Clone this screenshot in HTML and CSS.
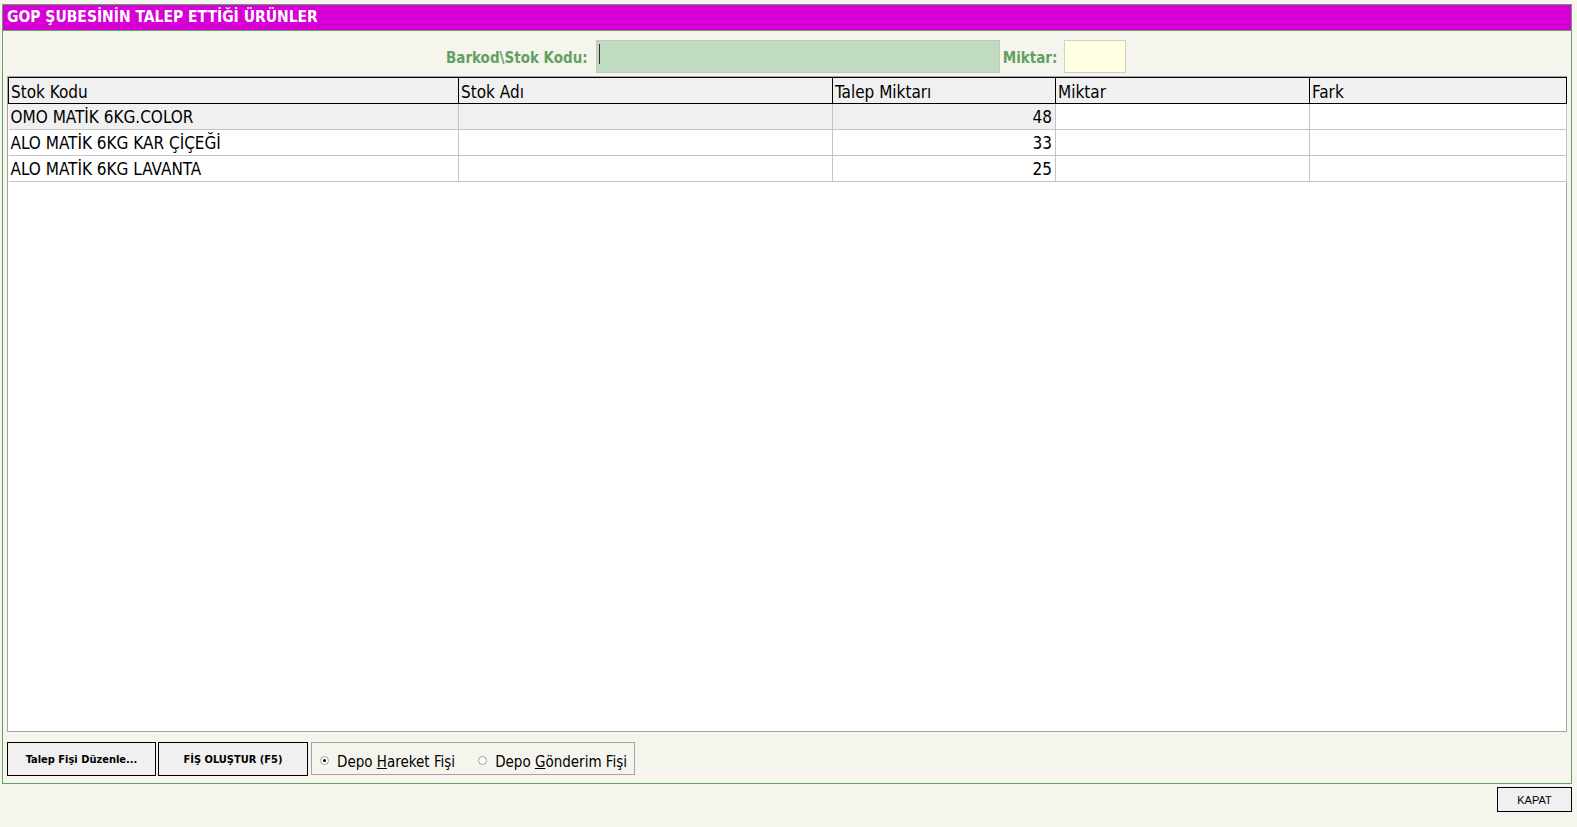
FILE: index.html
```html
<!DOCTYPE html>
<html lang="tr">
<head>
<meta charset="utf-8">
<title>GOP Şubesinin Talep Ettiği Ürünler</title>
<link rel="stylesheet" href="styles.css">
</head>
<body>
<div class="frame">
  <div class="title">GOP ŞUBESİNİN TALEP ETTİĞİ ÜRÜNLER</div>
  <div class="content">
    <div class="searchbar">
      <span class="lbl lbl-barkod">Barkod\Stok Kodu:</span>
      <div class="inp inp-barkod"><span class="caret"></span></div>
      <span class="lbl lbl-miktar">Miktar:</span>
      <div class="inp inp-miktar"></div>
    </div>
    <div class="grid">
      <table class="tbl">
        <colgroup>
          <col class="c1"><col class="c2"><col class="c3"><col class="c4"><col class="c5">
        </colgroup>
        <thead>
          <tr><th>Stok Kodu</th><th>Stok Adı</th><th>Talep Miktarı</th><th>Miktar</th><th>Fark</th></tr>
        </thead>
        <tbody>
          <tr class="cur"><td class="ro">OMO MATİK 6KG.COLOR</td><td class="ro"></td><td class="ro num">48</td><td></td><td></td></tr>
          <tr><td>ALO MATİK 6KG KAR ÇİÇEĞİ</td><td></td><td class="num">33</td><td></td><td></td></tr>
          <tr><td>ALO MATİK 6KG LAVANTA</td><td></td><td class="num">25</td><td></td><td></td></tr>
        </tbody>
      </table>
    </div>
    <div class="actions">
      <button class="btn btn-edit">Talep Fişi Düzenle...</button>
      <button class="btn btn-create">FİŞ OLUŞTUR (F5)</button>
      <div class="radiogroup">
        <label class="radio"><span class="dot on"></span><span>Depo <u>H</u>areket Fişi</span></label>
        <label class="radio"><span class="dot"></span><span>Depo <u>G</u>önderim Fişi</span></label>
      </div>
    </div>
  </div>
</div>
<div class="footer">
  <button class="btn-kapat">KAPAT</button>
</div>
</body>
</html>
```

FILE: styles.css
```css
html, body {
  margin: 0;
  padding: 0;
  background: #f5f5ee;
  font-family: "DejaVu Sans Condensed", "DejaVu Sans", sans-serif;
  font-stretch: condensed;
}

.frame {
  margin: 4px 0 0 2px;
  width: 1570px;
  box-sizing: border-box;
  border: 1px solid #64a064;
}

.title {
  height: 25px;
  background: #d600d6;
  border-bottom: 1px solid #64a064;
  color: #ffffff;
  font-weight: bold;
  font-size: 15.5px;
  line-height: 25px;
  padding-left: 4px;
}

.content {
  display: flex;
  flex-direction: column;
  padding: 9px 4px 7px 4px;
}

.searchbar {
  display: flex;
  align-items: center;
  height: 33px;
  padding-left: 439px;
}

.lbl {
  color: #64a064;
  font-weight: bold;
  font-size: 15px;
  padding-top: 2px;
}

.lbl-barkod { margin-right: 8px; }
.lbl-miktar { margin: 0 7px 0 3px; }

.inp {
  box-sizing: border-box;
  height: 33px;
  border: 1px solid #c4c4c4;
  position: relative;
}

.inp-barkod {
  width: 404px;
  background: #c0dcc0;
}

.inp-miktar {
  width: 62px;
  background: #ffffe2;
  border-color: #d0d0d0;
}

.caret {
  position: absolute;
  left: 2px;
  top: 3px;
  width: 1px;
  height: 20px;
  background: #303030;
}

.grid {
  margin-top: 3px;
  height: 656px;
  box-sizing: border-box;
  border: 1px solid #a4a4a4;
  background: #ffffff;
}

.tbl {
  table-layout: fixed;
  border-collapse: collapse;
  width: 1558px;
  font-size: 17px;
}

.c1 { width: 450px; }
.c2 { width: 374px; }
.c3 { width: 223px; }
.c4 { width: 254px; }
.c5 { width: 257px; }

.tbl th {
  height: 26px;
  box-sizing: border-box;
  background: #f0f0f0;
  border: 1px solid #000000;
  text-align: left;
  font-weight: normal;
  padding: 2px 2px 0 2px;
  color: #000;
  white-space: nowrap;
}

.tbl td {
  height: 26px;
  box-sizing: border-box;
  border-right: 1px solid #c4c4c4;
  border-bottom: 1px solid #c4c4c4;
  padding: 1px 2px 0 2px;
  color: #000;
  white-space: nowrap;
}

.tbl td.ro { background: #ffffff; }
.tbl tr.cur td.ro { background: #f0f0f0; }

.tbl td.num {
  text-align: right;
  padding-right: 3px;
}

.actions {
  display: flex;
  align-items: flex-start;
  margin-top: 10px;
  gap: 2px;
}

.btn {
  height: 34px;
  box-sizing: border-box;
  border: 1px solid #000000;
  background: #f0f0f0;
  font-family: inherit;
  font-stretch: condensed;
  font-weight: bold;
  font-size: 11px;
  color: #000;
  padding: 0;
}

.btn-edit { width: 149px; }
.btn-create { width: 150px; }

.radiogroup {
  margin-left: 1px;
  width: 324px;
  height: 33px;
  box-sizing: border-box;
  border: 1px solid #a4a4a4;
  display: flex;
  align-items: center;
  padding: 6px 0 0 8px;
  gap: 23px;
  font-size: 15px;
  color: #000;
}

.radio {
  display: flex;
  align-items: center;
  gap: 8px;
}

.dot {
  width: 9px;
  height: 9px;
  box-sizing: border-box;
  border: 1px solid #a0a0a0;
  border-radius: 50%;
  background: #ffffff;
  position: relative;
  margin-top: -2px;
}

.dot.on::after {
  content: "";
  position: absolute;
  left: 2px;
  top: 2px;
  width: 3px;
  height: 3px;
  border-radius: 50%;
  background: #000;
}

.footer {
  width: 1570px;
  margin: 3px 0 0 2px;
  display: flex;
  justify-content: flex-end;
}

.btn-kapat {
  width: 75px;
  height: 25px;
  box-sizing: border-box;
  border: 1px solid #000;
  background: #f0f0f0;
  font-family: "Liberation Sans", sans-serif;
  font-size: 11px;
  color: #000;
  padding: 0;
}
```
